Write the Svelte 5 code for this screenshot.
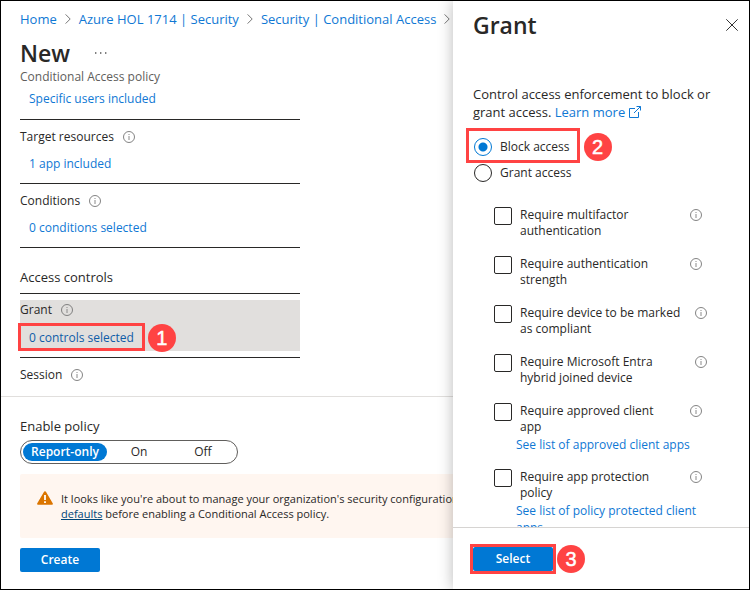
<script>
  let access = $state('block');
  let policy = $state('report');
  const crumbs = ['Home', 'Azure HOL 1714 | Security', 'Security | Conditional Access'];
  const modes = [
    { id: 'report', text: 'Report-only' },
    { id: 'on', text: 'On' },
    { id: 'off', text: 'Off' },
  ];
  const controls = [
    { id: 'mfa', text: 'Require multifactor authentication' },
    { id: 'strength', text: 'Require authentication strength' },
    { id: 'compliant', text: 'Require device to be marked as compliant', wide: true },
    { id: 'hybrid', text: 'Require Microsoft Entra hybrid joined device', wide: true },
    { id: 'client', text: 'Require approved client app', link: 'See list of approved client apps' },
    { id: 'protection', text: 'Require app protection policy', link: 'See list of policy protected client apps' },
  ];
</script>

{#snippet info()}
  <svg class="info" viewBox="0 0 12 12" aria-hidden="true">
    <circle cx="6" cy="6" r="5.5" fill="none" stroke="#757575" stroke-width="0.9" />
    <path d="M6 5v4M6 3v1" stroke="#8a8a8a" stroke-width="1" fill="none" />
  </svg>
{/snippet}

{#snippet chevron()}
  <svg class="chevron" viewBox="0 0 6 10" aria-hidden="true">
    <path d="M.6.4 5.2 5 .6 9.6" fill="none" stroke="#767676" />
  </svg>
{/snippet}

<div class="page">
  <main>
    <header>
      <nav aria-label="Breadcrumb">
        {#each crumbs as crumb}
          <a href="#top">{crumb}</a>
          {@render chevron()}
        {/each}
      </nav>
      <div class="heading">
        <h1>New</h1>
        <button class="more" aria-label="More">
          <svg viewBox="0 0 12 2" aria-hidden="true"><path d="M0 1h1.4M5 1h1.4M10 1h1.4" stroke="#555" stroke-width="1.4" /></svg>
        </button>
      </div>
      <p class="sub">Conditional Access policy</p>
    </header>

    <div class="settings">
      <section class="first"><a href="#users">Specific users included</a></section>
      <section>
        <h2>Target resources {@render info()}</h2>
        <a href="#resources">1 app included</a>
      </section>
      <section>
        <h2>Conditions {@render info()}</h2>
        <a href="#conditions">0 conditions selected</a>
      </section>
      <h2 class="group">Access controls</h2>
      <section class="active">
        <div class="fill">
          <h2>Grant {@render info()}</h2>
          <a class="marked" href="#grant">0 controls selected<span class="frame"></span><span class="badge">1</span></a>
        </div>
      </section>
      <h2 class="session">Session {@render info()}</h2>
    </div>

    <footer>
      <p class="label" id="enable">Enable policy</p>
      <div class="toggle" role="group" aria-labelledby="enable">
        {#each modes as mode}
          <button class:on={policy === mode.id} onclick={() => (policy = mode.id)}>{mode.text}</button>
        {/each}
      </div>
      <div class="warning">
        <svg viewBox="0 0 16 14" aria-hidden="true">
          <path d="M8 .3c.5 0 .9.3 1.1.7l6.6 11.2c.5.8 0 1.6-.9 1.6H1.2c-.9 0-1.4-.8-.9-1.6L6.9 1c.2-.4.6-.7 1.1-.7z" fill="#db7500" />
          <path d="M8 4v5M8 10.3v1.8" stroke="#fff" stroke-width="1.8" />
        </svg>
        <p>It looks like you're about to manage your organization's security configurations. That's great! You must first disable security<br /><a href="#defaults">defaults</a> before enabling a Conditional Access policy.</p>
      </div>
      <button class="primary create">Create</button>
    </footer>
  </main>

  <aside>
    <div class="top">
      <h1>Grant</h1>
      <button class="close" aria-label="Close">
        <svg viewBox="0 0 12 12" aria-hidden="true"><path d="M.3.3l11.4 11.4M11.7.3.3 11.7" stroke="#333" fill="none" /></svg>
      </button>
    </div>
    <div class="body">
      <p class="intro">Control access enforcement to block or grant access. <a href="#learn">Learn more <svg class="ext" viewBox="0 0 12 12" aria-hidden="true"><path d="M6 2.5H.5v9h9V6M7.5.5h4v4M11.5.5 5 7" fill="none" stroke="currentColor" /></svg></a></p>
      <div class="radios">
        <label class="marked"><input type="radio" name="access" value="block" bind:group={access} />Block access<span class="frame"></span><span class="badge">2</span></label>
        <label><input type="radio" name="access" value="grant" bind:group={access} />Grant access</label>
      </div>
      <div class="checks">
        {#each controls as c}
          <div class="check">
            <div class="row">
              <input type="checkbox" id={c.id} />
              <label for={c.id} class:wide={c.wide}>{c.text}</label>
              {@render info()}
            </div>
            {#if c.link}<a href="#{c.id}-list">{c.link}</a>{/if}
          </div>
        {/each}
      </div>
    </div>
    <div class="bottom">
      <div class="marked"><button class="primary">Select</button><span class="frame"></span><span class="badge">3</span></div>
    </div>
  </aside>
</div>

<style>
  * { box-sizing: border-box; }
  h1, h2, p { margin: 0; font-weight: 400; }
  button, input { font: inherit; margin: 0; }
  button { cursor: pointer; }
  a { color: #0f78d4; text-decoration: none; }
  svg { display: block; flex: none; }
  .page {
    display: flex;
    height: 100vh;
    overflow: hidden;
    border: 1px solid #000;
    background: #fff;
    color: #292827;
    font: 13px/18px "Open Sans", "Noto Sans", sans-serif;
  }
  main { flex: 1; min-width: 0; display: flex; flex-direction: column; overflow: hidden; }
  header { padding: 9px 0 0 19px; }
  nav { display: flex; align-items: center; gap: 8px; white-space: nowrap; }
  .chevron { width: 6px; height: 10px; }
  .heading { display: flex; align-items: center; gap: 25px; margin-top: 9px; }
  h1 { font-size: 23px; line-height: 32px; font-weight: 600; }
  .more { border: 0; background: none; padding: 0; }
  .more svg { width: 12px; height: 2px; }
  .sub { font-size: 12px; line-height: 16px; color: #605e5c; }
  .info { width: 12px; height: 12px; }
  .settings { flex: 1; min-height: 0; overflow: hidden; width: 299px; padding-left: 19px; font-size: 12px; }
  section { border-bottom: 1px solid #292827; height: 64px; padding: 8px 0 0; }
  section.first { height: 35px; padding-top: 5px; }
  section a { display: inline-block; margin-left: 9px; }
  h2 { display: flex; align-items: center; gap: 9px; font-size: 12px; line-height: 18px; }
  section h2 { margin-bottom: 9px; }
  .group { height: 46px; padding-top: 13px; border-bottom: 1px solid #292827; font-size: 13px; }
  section.active { padding-top: 6px; }
  .fill { background: #e1dfdd; height: 51px; padding-top: 1px; }
  .fill h2 { margin-bottom: 10px; }
  .fill a { color: #0e5ca8; }
  .session { padding-top: 8px; }
  .marked { position: relative; }
  .frame { position: absolute; border: 3px solid #ff4343; pointer-events: none; }
  .fill .frame { inset: -6px -11px -4px -11px; }
  .badge {
    position: absolute;
    top: 50%;
    left: calc(100% + 14px);
    width: 28px;
    height: 28px;
    margin-top: -14px;
    border-radius: 50%;
    background: #ff4343;
    color: #fff;
    font: 20px/28px "Liberation Sans", Arial, sans-serif;
    text-align: center;
    -webkit-text-stroke: 0.5px #fff;
  }
  footer { border-top: 1px solid #e1dfdd; padding: 20px 0 17px 19px; }
  .toggle { display: inline-flex; height: 24px; margin-top: 5px; padding: 2px; border: 1px solid #605e5c; border-radius: 12px; vertical-align: top; }
  .toggle button { width: 64px; border: 0; border-radius: 9px; background: none; padding: 0; color: inherit; font-size: 12px; line-height: 18px; }
  .toggle button:first-child { width: 84px; }
  .toggle .on { background: #0078d4; color: #fff; font-weight: 600; }
  .warning { display: flex; gap: 8px; height: 64px; margin-top: 10px; padding: 17px 0 0 17px; background: #fff6f0; border-radius: 2px 0 0 2px; overflow: hidden; }
  .warning svg { width: 16px; height: 14px; }
  .warning p { font-size: 11px; line-height: 15px; white-space: nowrap; }
  .warning a { color: #004578; text-decoration: underline; }
  .primary { display: block; width: 80px; height: 24px; border: 0; border-radius: 2px; padding: 0; background: #0078d4; color: #fff; font-size: 12px; line-height: 24px; font-weight: 600; }
  .create { margin-top: 10px; }
  aside { position: relative; z-index: 1; flex: none; width: 296px; display: flex; flex-direction: column; background: #fff; box-shadow: 0 0 14px rgba(0, 0, 0, 0.28); }
  .top { display: flex; justify-content: space-between; align-items: center; padding: 8px 11px 0 20px; }
  .close { border: 0; background: none; padding: 0; }
  .close svg { width: 12px; height: 12px; }
  .body { flex: 1; min-height: 0; overflow: hidden; padding: 44px 0 0 20px; }
  .intro { padding-right: 28px; }
  .ext { display: inline; width: 12px; height: 12px; vertical-align: -1px; }
  .radios { display: flex; flex-direction: column; align-items: flex-start; gap: 8px; margin-top: 17px; padding-left: 1px; font-size: 12px; }
  .radios label { display: flex; align-items: center; gap: 8px; }
  .radios .frame { inset: -10px -10px -7px -8px; }
  input { appearance: none; flex: none; width: 18px; height: 18px; border: 1px solid #292827; border-radius: 2px; background: #fff; }
  input[type="radio"] { border-radius: 50%; }
  input[type="radio"]:checked { border-color: #0078d4; background: radial-gradient(circle, #0078d4 4px, #fff 5px); }
  input[type="checkbox"]:checked { background: #0078d4; }
  .checks { display: flex; flex-direction: column; gap: 16px; margin-top: 25px; padding-left: 21px; line-height: 16px; font-size: 12px; }
  .row { display: flex; align-items: flex-start; height: 33px; }
  .row label { width: 170px; margin-left: 8px; padding-right: 20px; }
  .row .wide { width: 175px; padding-right: 8px; }
  .row .info { margin-top: 2px; }
  .check a { display: block; width: 200px; margin-left: 22px; line-height: 17px; height: 17px; }
  .bottom { flex: none; height: 62px; border-top: 1px solid #d6d4d2; padding: 19px 0 0 20px; display: flex; align-items: flex-start; }
  .bottom .frame { inset: -3px; }
  .bottom .badge { left: calc(100% + 4px); }
</style>
